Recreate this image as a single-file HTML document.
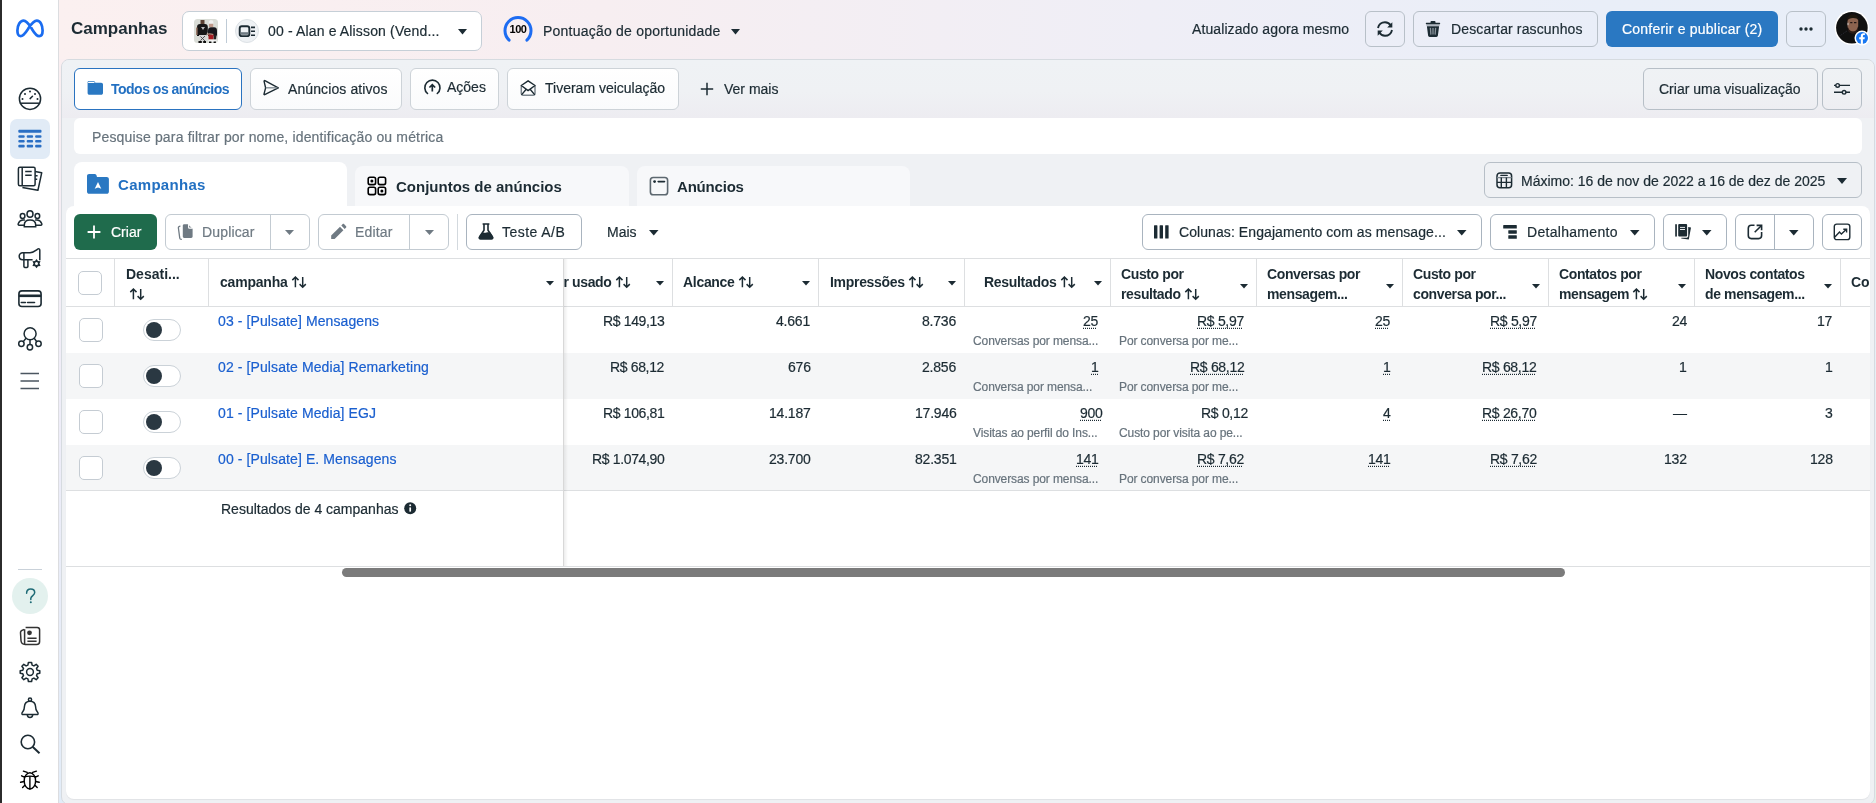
<!DOCTYPE html>
<html><head><meta charset="utf-8">
<style>
*{box-sizing:border-box;margin:0;padding:0}
html,body{width:1876px;height:803px;overflow:hidden}
body{position:relative;font-family:"Liberation Sans",sans-serif;font-size:14px;color:#1c2b33;background:#fff}
.a{position:absolute}
.t{position:absolute;white-space:nowrap;will-change:transform;-webkit-text-stroke:0.2px currentColor}
svg{position:absolute;overflow:visible}
.ar{display:inline-block;position:relative;width:15px;height:12px;margin-left:0.5px;vertical-align:-1px}
.ar svg{left:0;top:0}
.dt{text-decoration:underline dotted 1px;text-underline-offset:2px}
</style></head><body>
<div class="a" style="left:0px;top:0px;width:2px;height:803px;background:#2b2b2b"></div>
<div class="a" style="left:2px;top:0px;width:56px;height:803px;background:#fff"></div>
<div class="a" style="left:58px;top:0px;width:1px;height:803px;background:#dcdde0"></div>
<div class="a" style="left:59px;top:0px;width:1817px;height:803px;background:linear-gradient(90deg,#fbf0f0 0%,#f7eef1 30%,#efeef6 60%,#e9eef8 85%,#e8eef8 100%)"></div>
<div class="a" style="left:59px;top:59px;width:10px;height:744px;background:linear-gradient(180deg,#faeff1 0%,#efedf8 45%,#e2ecf8 100%)"></div>
<div class="a" style="left:1866px;top:59px;width:10px;height:744px;background:linear-gradient(180deg,#e8eef8 0%,#e6eff4 60%,#e3f0e9 100%)"></div>
<div class="a" style="left:61px;top:59px;width:1814px;height:746px;background:#eff1f4;border:1px solid #d6dbe0;border-radius:8px"></div>
<div class="a" style="left:62px;top:60px;width:1812px;height:58px;background:linear-gradient(180deg,#eff2f5 0%,#eff1f4 55%,#edecf1 100%);border-radius:7px 7px 0 0"></div>
<div class="a" style="left:66px;top:206px;width:1804px;height:593px;background:#fff;border-radius:8px;box-shadow:0 1px 1px rgba(0,0,0,0.06)"></div>
<svg style="left:16px;top:19px" width="28" height="19" viewBox="0 0 28 19"><path d="M4.6 17.2C2.2 17.2 1.4 14.6 1.4 11.6C1.4 6.2 4.2 1.6 7.6 1.6C10.6 1.6 12.6 4.6 15.2 8.8C17.8 13 19.8 17.2 23.2 17.2C25.6 17.2 26.6 14.6 26.6 11.6C26.6 6.2 24.4 1.6 20.8 1.6C17.6 1.6 15.4 4.8 12.8 8.8C10.2 12.8 7.6 17.2 4.6 17.2Z" fill="none" stroke="#1a6cf0" stroke-width="2.7"/></svg>
<svg style="left:18px;top:87px" width="24" height="24" viewBox="0 0 24 24"><circle cx="12" cy="11.8" r="10.6" fill="none" stroke="#1c2b33" stroke-width="1.5"/><path d="M1.8 16.2H22.2" stroke="#1c2b33" stroke-width="1.5"/><g fill="#1c2b33"><circle cx="4.5" cy="11.9" r="1"/><circle cx="7" cy="6.9" r="1"/><circle cx="12" cy="4.4" r="1"/><circle cx="17" cy="6.9" r="1"/><circle cx="19.5" cy="11.9" r="1"/></g><path d="M12.1 11.6L14.5 9.3" stroke="#1c2b33" stroke-width="1.5" stroke-linecap="round"/></svg>
<div class="a" style="left:10px;top:119px;width:40px;height:40px;background:#e1ebf6;border-radius:7px"></div>
<svg style="left:18px;top:129px" width="24" height="21" viewBox="0 0 24 21"><g fill="#2a6fc4"><rect x="0.3" y="0.8" width="23.2" height="3" rx="1"/><rect x="0.3" y="6.2" width="6.4" height="2.6" rx="1"/><rect x="8.7" y="6.2" width="6.4" height="2.6" rx="1"/><rect x="17.1" y="6.2" width="6.4" height="2.6" rx="1"/><rect x="0.3" y="11" width="6.4" height="2.6" rx="1"/><rect x="8.7" y="11" width="6.4" height="2.6" rx="1"/><rect x="17.1" y="11" width="6.4" height="2.6" rx="1"/><rect x="0.3" y="15.8" width="6.4" height="2.6" rx="1"/><rect x="8.7" y="15.8" width="6.4" height="2.6" rx="1"/><rect x="17.1" y="15.8" width="6.4" height="2.6" rx="1"/></g></svg>
<svg style="left:17px;top:166px" width="26" height="26" viewBox="0 0 26 26"><g fill="none" stroke="#1c2b33" stroke-width="1.5" stroke-linejoin="round"><path d="M18.1 5.4L24.7 6.8L20.9 24.3L5.4 21.5"/><rect x="1.4" y="1.2" width="16.7" height="18.5" rx="1.5" fill="#fff"/><path d="M5.2 1.2V19.7"/><path d="M8.2 5.6H14.7M8.2 9.2H14.7"/><path d="M18.1 9.8H20.6M18.1 13.3H20.2"/></g></svg>
<svg style="left:17px;top:209px" width="26" height="20" viewBox="0 0 26 20"><g fill="none" stroke="#1c2b33" stroke-width="1.5"><ellipse cx="13" cy="5" rx="3" ry="3.3"/><ellipse cx="5.6" cy="7" rx="2.3" ry="2.5"/><ellipse cx="20.4" cy="7" rx="2.3" ry="2.5"/><path d="M7.3 17.7V16C7.3 12.5 9.8 10.9 13 10.9C16.2 10.9 18.7 12.5 18.7 16V17.7H7.3Z"/><path d="M7.5 16.2H2.2C1.2 16.2 0.9 15.4 1.3 14.5C2.1 12.6 3.6 11.1 6 11.1H7.9"/><path d="M18.5 16.2H23.8C24.8 16.2 25.1 15.4 24.7 14.5C23.9 12.6 22.4 11.1 20 11.1H18.1"/></g></svg>
<svg style="left:18px;top:247px" width="24" height="22" viewBox="0 0 24 22"><g fill="none" stroke="#1c2b33" stroke-width="1.5" stroke-linejoin="round"><path d="M21.8 13.2V3.2C21.8 1.8 20.7 1.4 19.6 2.1C17.4 3.6 15.6 5.7 12 5.7H4.7C2.7 5.7 1.2 7.2 1.2 9.2C1.2 11.2 2.7 12.7 4.7 12.7H14.6"/><path d="M5.9 5.9V19.2C5.9 20.1 6.6 20.6 7.9 20.6C9.2 20.6 9.9 20.1 9.9 19.2V12.8"/></g><path d="M18.50 11.90L20.00 14.00L22.57 14.25L21.50 16.60L22.57 18.95L20.00 19.20L18.50 21.30L17.00 19.20L14.43 18.95L15.50 16.60L14.43 14.25L17.00 14.00Z" fill="#1c2b33"/><circle cx="18.5" cy="16.6" r="1.5" fill="#fff"/></svg>
<svg style="left:18px;top:290px" width="24" height="18" viewBox="0 0 24 18"><g fill="none" stroke="#1c2b33"><rect x="0.9" y="0.9" width="22.2" height="15.6" rx="3" stroke-width="1.6"/><path d="M0.9 5.8H23.1" stroke-width="2.6"/><path d="M3.3 12.5H7.4M9.6 12.5H16.5" stroke-width="1.6" stroke-linecap="round"/></g></svg>
<svg style="left:17px;top:326px" width="26" height="26" viewBox="0 0 26 26"><g fill="none" stroke="#1c2b33" stroke-width="1.5"><circle cx="13.1" cy="7.8" r="6"/><circle cx="4.4" cy="17.8" r="2.7"/><circle cx="12.9" cy="21.3" r="2.7"/><circle cx="21.5" cy="17.8" r="2.7"/><path d="M9 12.2L6.3 15.6M13 13.8V18.6M17.2 12.2L19.7 15.6"/></g></svg>
<svg style="left:20px;top:372px" width="20" height="18" viewBox="0 0 20 18"><g stroke="#4b5660" stroke-width="1.7"><path d="M0.5 1.5H19M0.5 9H19M0.5 16.5H19"/></g></svg>
<div class="a" style="left:18px;top:569px;width:24px;height:1px;background:#c9d1d9"></div>
<div class="a" style="left:12px;top:578px;width:36px;height:36px;background:#e3f1ee;border-radius:50%"></div>
<svg style="left:12px;top:578px" width="36" height="36" viewBox="0 0 36 36"><path d="M14.6 15.2C14.6 12.6 16.4 10.9 18.7 10.9C21 10.9 22.7 12.5 22.7 14.6C22.7 17.4 19.2 17.8 18.8 20.4V21.4" fill="none" stroke="#1f6b76" stroke-width="1.5" stroke-linecap="round"/><circle cx="18.8" cy="24.2" r="1" fill="#1f6b76"/></svg>
<svg style="left:19px;top:626px" width="22" height="20" viewBox="0 0 22 20"><g fill="none" stroke="#333" stroke-width="1.5" stroke-linejoin="round"><path d="M6.6 1.4H18.2C19.6 1.4 20.6 2.4 20.6 3.8V15.4C20.6 17.2 19.6 18.4 17.6 18.4H6.2C3.6 18.4 2.2 17 2 14.8L1.5 6.8C1.4 5.4 2.2 4.3 5.2 3.6"/><path d="M5.6 3.2V18.2"/></g><circle cx="10.5" cy="6.8" r="2.4" fill="#333"/><path d="M8.4 12.2H17.6M8.4 15.2H17.6" stroke="#333" stroke-width="1.5"/></svg>
<svg style="left:19px;top:661px" width="22" height="22" viewBox="0 0 22 22"><path d="M9.3 1.3H12.7L13.2 4.3L15.4 5.2L17.9 3.4L20.3 5.8L18.5 8.3L19.4 10.5L22.4 11V14.4L19.4 14.9L18.5 17.1L20.3 19.6L17.9 22L15.4 20.2L13.2 21.1L12.7 24.1" fill="none" stroke="none"/><g transform="translate(11 11)" fill="none" stroke="#1c2b33" stroke-width="1.5" stroke-linejoin="round"><path d="M-1.6 -9.6H1.6L2.1 -6.9L3.9 -6.1L6.2 -7.7L8.1 -5.8L6.5 -3.5L7.2 -1.8L9.8 -1.3V1.3L7.2 1.8L6.5 3.5L8.1 5.8L6.2 7.7L3.9 6.1L2.1 6.9L1.6 9.6H-1.6L-2.1 6.9L-3.9 6.1L-6.2 7.7L-8.1 5.8L-6.5 3.5L-7.2 1.8L-9.8 1.3V-1.3L-7.2 -1.8L-6.5 -3.5L-8.1 -5.8L-6.2 -7.7L-3.9 -6.1L-2.1 -6.9Z"/><circle r="3.4"/></g></svg>
<svg style="left:20px;top:697px" width="22" height="22" viewBox="0 0 22 22"><g fill="none" stroke="#1c2b33" stroke-width="1.5" stroke-linejoin="round"><circle cx="10" cy="2.7" r="1.6"/><path d="M10 4.3C6.8 4.3 4.6 6.6 4.4 9.8C4.3 11.6 4.3 12.6 3.2 14C2.1 15.4 1.2 16.3 2 17.2C2.3 17.5 2.8 17.6 3.4 17.6H16.6C17.2 17.6 17.7 17.5 18 17.2C18.8 16.3 17.9 15.4 16.8 14C15.7 12.6 15.7 11.6 15.6 9.8C15.4 6.6 13.2 4.3 10 4.3Z"/><path d="M7.3 17.8C7.5 19.3 8.6 20.4 10 20.4C11.4 20.4 12.5 19.3 12.7 17.8"/></g></svg>
<svg style="left:20px;top:734px" width="22" height="22" viewBox="0 0 22 22"><g fill="none" stroke="#1c2b33" stroke-width="1.6"><circle cx="7.9" cy="8" r="6.7"/><path d="M12.6 12.8L19.5 19.2" stroke-width="2"/></g></svg>
<svg style="left:19px;top:769px" width="22" height="22" viewBox="0 0 22 22"><g fill="none" stroke="#000" stroke-width="1.4" stroke-linecap="round"><ellipse cx="10.9" cy="11.9" rx="5.7" ry="8.1"/><path d="M5.4 7.6C7.5 7 14.3 7 16.4 7.6"/><path d="M10.9 7.6V20"/><path d="M8.2 3.4L4.4 2.2M13.6 3.4L17.4 2.2"/><path d="M5.4 8.2L2.6 6.8M5.2 12.5L1.6 13.3M5.6 16.5L3.6 18.5M16.4 8.2L19.2 6.8M16.6 12.5L20.2 13.3M16.2 16.5L18.2 18.5"/></g></svg>
<div class="t" style="left:71.0px;top:18.6px;font-size:17px;line-height:20px;font-weight:700;-webkit-text-stroke:0;color:#1c2b33">Campanhas</div>
<div class="a" style="left:182px;top:11px;width:300px;height:40px;background:#fff;border:1px solid #c6cfd7;border-radius:7px"></div>
<svg style="left:194px;top:19px" width="24" height="24" viewBox="0 0 24 24"><defs><clipPath id="cp1"><rect width="24" height="24" rx="3.5"/></clipPath><filter id="bl1" x="-10%" y="-10%" width="120%" height="120%"><feGaussianBlur stdDeviation="0.5"/></filter></defs><g clip-path="url(#cp1)"><rect width="24" height="24" fill="#d9dcd6"/><g filter="url(#bl1)"><path d="M6.5 1H10.5V5H6.5Z" fill="#5a4030"/><path d="M3 17V8C3 6 4.2 5 6 5H11C12.8 5 13.8 6 13.8 8V13L12 17Z" fill="#141414"/><path d="M7 8H11L9 11Z" fill="#b8b8b8"/><path d="M2 8.5H3.6V16H2Z" fill="#9a7a68"/><path d="M5 16H12.5L12 23H6Z" fill="#d4d4d4"/><path d="M6.5 17.5L11 22M11 17L6.5 21.5" stroke="#444" stroke-width="0.9"/><path d="M4.5 22H7.8V25H4.5ZM9.2 22H12V25H9.2Z" fill="#0c0c0c"/><path d="M14.8 3C15 1.8 15.8 1.2 17.2 1.2C18.6 1.2 19.4 1.8 19.4 3V4.8H14.8Z" fill="#f0f0f0"/><path d="M15 4.8H19.2V8H15Z" fill="#c0998a"/><path d="M14 17V11.5C14 9.4 15.2 8.2 17 8.2H20C22 8.2 23 9.4 23 11.5V16.5Z" fill="#18181a"/><path d="M14.4 15.6H19.8L19.4 20.4H14.6Z" fill="#a41e24"/><path d="M12.8 15.4C14.6 14.6 17 14.6 19.2 15.6" stroke="#b08878" stroke-width="1.2" fill="none"/><path d="M19.8 16H22.6L22 20.5H19.6Z" fill="#202020"/><path d="M14.6 20.6H22.4V23H14.6Z" fill="#f2f2f2"/><path d="M15 22.4H17.4V25H15ZM19.6 22.4H22V25H19.6Z" fill="#0c0c0c"/></g></g></svg>
<div class="a" style="left:226px;top:19px;width:1px;height:24px;background:#bfcbd6"></div>
<div class="a" style="left:235px;top:19px;width:24px;height:24px;background:#eef1f4;border:1px solid #dde2e6;border-radius:50%"></div>
<svg style="left:235px;top:19px" width="24" height="24" viewBox="0 0 24 24"><rect x="4.7" y="7.2" width="9.6" height="9.9" rx="2.2" fill="none" stroke="#1c2b33" stroke-width="1.9"/><rect x="6" y="13.2" width="7" height="2.6" fill="#6f7a83"/><path d="M16 8.4H20M16 12.2H20M16 16.2H20" stroke="#1c2b33" stroke-width="1.6"/></svg>
<div class="t" style="left:267.5px;top:22.9px;font-size:14px;line-height:16px;color:#1c2b33;letter-spacing:0.15px">00 - Alan e Alisson (Vend...</div>
<svg style="left:457.5px;top:28.5px" width="9" height="5.5"><path d="M0 0H9L4.5 5.5Z" fill="#1c2b33"/></svg>
<svg style="left:503px;top:16px" width="30" height="27" viewBox="0 0 30 27"><path d="M6.1 24.1A13 13 0 1 1 23.9 24.1" fill="none" stroke="#1d6cf2" stroke-width="3" stroke-linecap="round"/></svg>
<div class="t" style="left:503px;top:23.2px;width:30px;text-align:center;font-size:11px;line-height:13px;font-weight:700;-webkit-text-stroke:0;color:#000;letter-spacing:-0.4px">100</div>
<div class="t" style="left:542.5px;top:22.9px;font-size:14px;line-height:16px;color:#1c2b33;letter-spacing:0.22px">Pontuação de oportunidade</div>
<svg style="left:731px;top:28.6px" width="9" height="5.5"><path d="M0 0H9L4.5 5.5Z" fill="#1c2b33"/></svg>
<div class="t" style="left:1191.5px;top:21.3px;font-size:14px;line-height:16px;color:#1c2b33;letter-spacing:0.1px">Atualizado agora mesmo</div>
<div class="a" style="left:1365px;top:11px;width:40px;height:36px;border:1px solid #b8c0c8;border-radius:6px"></div>
<svg style="left:1376px;top:20px" width="18" height="18" viewBox="0 0 18 18"><g fill="none" stroke="#1c2b33" stroke-width="1.9"><path d="M2 8C2.6 4.6 5.5 2.2 9 2.2C11.6 2.2 13.6 3.5 14.7 5.4"/><path d="M16 10C15.4 13.4 12.5 15.8 9 15.8C6.4 15.8 4.4 14.5 3.3 12.6"/></g><path d="M16.3 2.3V7.6H11.2Z" fill="#1c2b33"/><path d="M1.7 15.7V10.4H6.8Z" fill="#1c2b33"/></svg>
<div class="a" style="left:1413px;top:11px;width:185px;height:36px;border:1px solid #b8c0c8;border-radius:6px"></div>
<svg style="left:1425px;top:20px" width="16" height="18" viewBox="0 0 16 18"><path d="M5.5 1.9C5.5 1.4 5.9 1 6.4 1H9.6C10.1 1 10.5 1.4 10.5 1.9V2.8H14.6C15 2.8 15.2 3.1 15.2 3.5C15.2 3.9 15 4.2 14.6 4.2H1.4C1 4.2 0.8 3.9 0.8 3.5C0.8 3.1 1 2.8 1.4 2.8H5.5Z" fill="#1c2b33"/><rect x="1.4" y="4.2" width="13.2" height="1.4" fill="#8a949c"/><path d="M1.9 6.2H14.1L12.9 15.6C12.8 16.4 12.2 16.9 11.4 16.9H4.6C3.8 16.9 3.2 16.4 3.1 15.6Z" fill="#1c2b33"/><path d="M5.4 7.9L5.9 14.6M8 7.9V14.6M10.6 7.9L10.1 14.6" stroke="#8a949c" stroke-width="1.3"/></svg>
<div class="t" style="left:1450.5px;top:21.3px;font-size:14px;line-height:16px;color:#1c2b33;letter-spacing:0.13px">Descartar rascunhos</div>
<div class="a" style="left:1606px;top:11px;width:172px;height:36px;background:#2a78c2;border-radius:6px"></div>
<div class="t" style="left:1621.8px;top:21.2px;font-size:14px;line-height:16px;color:#fff;letter-spacing:0.22px">Conferir e publicar (2)</div>
<div class="a" style="left:1786px;top:11px;width:40px;height:36px;border:1px solid #b8c0c8;border-radius:6px"></div>
<svg style="left:1798px;top:27px" width="16" height="4" viewBox="0 0 16 4"><g fill="#1c2b33"><circle cx="3" cy="2" r="1.7"/><circle cx="8" cy="2" r="1.7"/><circle cx="13" cy="2" r="1.7"/></g></svg>
<svg style="left:1834px;top:10px" width="36" height="36" viewBox="0 0 36 36"><defs><clipPath id="cp2"><circle cx="17.9" cy="17.8" r="15.8"/></clipPath><filter id="bl2" x="-20%" y="-20%" width="140%" height="140%"><feGaussianBlur stdDeviation="0.5"/></filter></defs><circle cx="17.9" cy="17.8" r="17.3" fill="#fff"/><g clip-path="url(#cp2)"><rect width="36" height="36" fill="#101010"/><g filter="url(#bl2)"><path d="M13.5 10.5C13.5 7.5 15.6 6.2 19 6.2C22.4 6.2 24.2 7.8 24.2 10.5V15.5C24.2 18.6 22.6 21.8 19 21.8C15.4 21.8 13.5 18.6 13.5 15.5Z" fill="#8c6450"/><path d="M13.8 16.5C14.6 19.8 16.6 21.6 19 21.6C21.4 21.6 23.4 19.8 24 16.5L24.2 19.5C23.4 22.4 21.4 23.8 19 23.8C16.6 23.8 14.6 22.4 13.8 19.5Z" fill="#2a1c16"/><path d="M12.8 11.5C12.8 6.2 15.4 4.2 19 4.2C22.8 4.2 25 6.2 24.8 11C23.6 8.6 21.6 8 19 8C16.4 8 14.2 8.6 12.8 11.5Z" fill="#1c120e"/><path d="M16.2 12.6H18.4M20 12.6H22.4" stroke="#241814" stroke-width="1.2"/><path d="M14 12.8V15.2" stroke="#e8e8e8" stroke-width="0.8"/><path d="M4 27L13 21" stroke="#3a3a4a" stroke-width="0.7" stroke-dasharray="1 1"/></g></g><circle cx="28" cy="28" r="7.5" fill="#fff"/><circle cx="28" cy="28" r="6" fill="#1877f2"/><path d="M28.9 34V29.2H30.5L30.8 27.3H28.9V26.1C28.9 25.5 29.2 25 30.1 25H30.9V23.3C30.5 23.2 30 23.2 29.4 23.2C27.8 23.2 26.8 24.2 26.8 25.9V27.3H25.2V29.2H26.8V34Z" fill="#fff"/></svg>
<div class="a" style="left:74px;top:68px;width:168px;height:42px;background:#fff;border:1.5px solid #2a73c0;border-radius:6px"></div>
<svg style="left:87px;top:80px" width="17" height="16" viewBox="0 0 17 16"><path d="M0.6 2.2C0.6 1.2 1.2 0.9 2 0.9H6.4C7.2 0.9 7.6 1.4 8 2.1L8.4 2.8H14.2C15.2 2.8 16 3.5 16 4.5V13C16 14 15.2 14.8 14.2 14.8H2.4C1.4 14.8 0.6 14 0.6 13Z" fill="#2a78c2"/><path d="M1.6 2.3H7" stroke="#fff" stroke-width="1.2" stroke-linecap="round"/></svg>
<div class="t" style="left:110.5px;top:80.5px;font-size:14px;line-height:16px;font-weight:700;-webkit-text-stroke:0;color:#2270c2;letter-spacing:-0.5px">Todos os anúncios</div>
<div class="a" style="left:250px;top:68px;width:152px;height:42px;background:linear-gradient(#fff,#fafbfc);border:1px solid #cdd3d8;border-radius:6px"></div>
<svg style="left:262px;top:79px" width="20" height="18" viewBox="0 0 20 18"><path d="M2.9 1.6L16.3 8.8L2.7 15.7C2.2 15.9 1.9 15.5 2 15.1L3.6 8.8L2.1 2.3C2 1.8 2.4 1.4 2.9 1.6Z" fill="none" stroke="#1c2b33" stroke-width="1.4" stroke-linejoin="round"/><path d="M3.8 8.8H15.5" stroke="#7d8890" stroke-width="1.3"/></svg>
<div class="t" style="left:288.0px;top:80.5px;font-size:14px;line-height:16px;color:#1c2b33;letter-spacing:0.1px">Anúncios ativos</div>
<div class="a" style="left:410px;top:68px;width:89px;height:42px;background:linear-gradient(#fff,#fafbfc);border:1px solid #cdd3d8;border-radius:6px"></div>
<svg style="left:422px;top:79px" width="20" height="17" viewBox="0 0 20 17"><path d="M5.5 14.5A7.6 7.6 0 1 1 15.3 14.5" fill="none" stroke="#1c2b33" stroke-width="1.6" stroke-linecap="round"/><path d="M10.3 12.6V5.8M7.4 8.5L10.3 5.6L13.2 8.5" fill="none" stroke="#1c2b33" stroke-width="1.7"/></svg>
<div class="t" style="left:447.3px;top:79.1px;font-size:14px;line-height:16px;color:#1c2b33">Ações</div>
<div class="a" style="left:507px;top:68px;width:172px;height:42px;background:linear-gradient(#fff,#fafbfc);border:1px solid #cdd3d8;border-radius:6px"></div>
<svg style="left:519px;top:79px" width="18" height="18" viewBox="0 0 18 18"><path d="M2.3 6.5V14.6C2.3 15.6 3 16.2 4 16.2H14.3C15.3 16.2 16 15.6 16 14.6V6.5" fill="none" stroke="#7b858d" stroke-width="1.5"/><path d="M2.3 6.5L9.1 1.8L16 6.5L9.1 11.6Z" fill="none" stroke="#1c2b33" stroke-width="1.4" stroke-linejoin="round"/><path d="M2.5 15.9L7.2 10.3M15.8 15.9L11.1 10.3" stroke="#1c2b33" stroke-width="1.4"/></svg>
<div class="t" style="left:545.0px;top:80.3px;font-size:14px;line-height:16px;color:#1c2b33">Tiveram veiculação</div>
<svg style="left:700px;top:82px" width="14" height="14" viewBox="0 0 14 14"><path d="M7 0.8V13.2M0.8 7H13.2" stroke="#1c2b33" stroke-width="1.5"/></svg>
<div class="t" style="left:723.5px;top:81.1px;font-size:14px;line-height:16px;color:#1c2b33">Ver mais</div>
<div class="a" style="left:1643px;top:68px;width:175px;height:42px;border:1px solid #b7bfc7;border-radius:6px"></div>
<div class="t" style="left:1659.3px;top:81.1px;font-size:14px;line-height:16px;color:#1c2b33">Criar uma visualização</div>
<div class="a" style="left:1822px;top:68px;width:40px;height:42px;border:1px solid #b7bfc7;border-radius:6px"></div>
<svg style="left:1833px;top:82px" width="18" height="13" viewBox="0 0 18 13"><g fill="none" stroke="#1c2b33" stroke-width="1.4"><path d="M1 3.4H2.9M6.3 3.4H17M1 10.3H9.5M12.8 10.3H17"/><circle cx="4.6" cy="3.4" r="1.8"/><circle cx="11.1" cy="10.3" r="1.8"/></g></svg>
<div class="a" style="left:74px;top:118px;width:1788px;height:36px;background:#fff;border-radius:6px"></div>
<div class="t" style="left:91.5px;top:128.5px;font-size:14px;line-height:16px;color:#67737c;letter-spacing:0.16px">Pesquise para filtrar por nome, identificação ou métrica</div>
<div class="a" style="left:1484px;top:162px;width:378px;height:36px;border:1px solid #b7bfc7;border-radius:6px"></div>
<svg style="left:1496px;top:172px" width="17" height="17" viewBox="0 0 17 17"><rect x="1" y="0.9" width="14.6" height="14.9" rx="3" fill="none" stroke="#1c2b33" stroke-width="1.5"/><path d="M1 5.6H15.6" stroke="#7b858d" stroke-width="1.3"/><path d="M4.9 3.4H11.2" stroke="#1c2b33" stroke-width="1.4" stroke-linecap="round"/><path d="M1 10.4H15.6M5.3 5.6V15.8M10.4 5.6V15.8" stroke="#1c2b33" stroke-width="1.4"/></svg>
<div class="t" style="left:1521.0px;top:172.6px;font-size:14px;line-height:16px;color:#1c2b33">Máximo: 16 de nov de 2022 a 16 de dez de 2025</div>
<svg style="left:1837px;top:177.5px" width="10" height="6"><path d="M0 0H10L5.0 6Z" fill="#1c2b33"/></svg>
<div class="a" style="left:74px;top:162px;width:273px;height:46px;background:#fff;border-radius:8px 8px 0 0"></div>
<div class="a" style="left:355px;top:166px;width:274px;height:40px;background:#f7f8fa;border-radius:8px 8px 0 0"></div>
<div class="a" style="left:637px;top:166px;width:273px;height:40px;background:#f7f8fa;border-radius:8px 8px 0 0"></div>
<svg style="left:86px;top:173px" width="24" height="21" viewBox="0 0 24 21"><path d="M1 3.2C1 1.8 1.8 1 3.1 1H8.6C9.4 1 10 1.4 10.4 2.1L11 4H20.6C22 4 22.9 4.9 22.9 6.3V18.4C22.9 19.8 22 20.8 20.6 20.8H3.3C1.9 20.8 1 19.8 1 18.4Z" fill="#2a78c2"/><path d="M12 9L15.3 15.8L12 14.4L8.7 15.8Z" fill="#fff"/></svg>
<div class="t" style="left:117.5px;top:175.8px;font-size:15px;line-height:18px;font-weight:700;-webkit-text-stroke:0;color:#2270c2;letter-spacing:0.3px">Campanhas</div>
<svg style="left:367px;top:176px" width="20" height="20" viewBox="0 0 20 20"><g fill="none" stroke="#000" stroke-width="1.6"><rect x="1.2" y="1.2" width="7.4" height="7.4" rx="1.8"/><rect x="11.2" y="1.2" width="7.4" height="7.4" rx="1.8"/><rect x="1.2" y="11.2" width="7.4" height="7.4" rx="1.8"/><rect x="11.2" y="11.2" width="7.4" height="7.4" rx="1.8"/></g><circle cx="4.9" cy="4.9" r="1.5" fill="#000"/><circle cx="14.9" cy="14.9" r="1.5" fill="#000"/></svg>
<div class="t" style="left:395.5px;top:177.8px;font-size:15px;line-height:18px;font-weight:700;-webkit-text-stroke:0;color:#1c2b33">Conjuntos de anúncios</div>
<svg style="left:649px;top:176px" width="20" height="20" viewBox="0 0 20 20"><rect x="1.4" y="1.5" width="17.2" height="17.2" rx="2.8" fill="none" stroke="#5d6870" stroke-width="1.6"/><circle cx="5.6" cy="5.6" r="1.4" fill="#1c2b33"/><path d="M9.2 5.6H15.5" stroke="#1c2b33" stroke-width="1.6" stroke-linecap="round"/></svg>
<div class="t" style="left:677.0px;top:178.0px;font-size:15px;line-height:18px;font-weight:700;-webkit-text-stroke:0;color:#1c2b33;letter-spacing:-0.2px">Anúncios</div>
<div class="a" style="left:74px;top:214px;width:83px;height:36px;background:#1f6b4c;border-radius:6px"></div>
<svg style="left:87px;top:225px" width="14" height="14" viewBox="0 0 14 14"><path d="M7 0.6V13.4M0.6 7H13.4" stroke="#fff" stroke-width="1.8"/></svg>
<div class="t" style="left:110.5px;top:224.1px;font-size:14px;line-height:16px;color:#fff">Criar</div>
<div class="a" style="left:165px;top:214px;width:145px;height:36px;border:1px solid #c3cbd2;border-radius:6px"></div>
<div class="a" style="left:270px;top:214px;width:1px;height:36px;background:#c3cbd2"></div>
<svg style="left:176px;top:223px" width="18" height="18" viewBox="0 0 18 18"><path d="M7.2 1.2H11.8L16.6 5.8V13.6C16.6 14.4 16 15 15.2 15H8.2C7.4 15 6.8 14.4 6.8 13.6V2.6C6.8 1.8 7.4 1.2 8.2 1.2Z" fill="#6f7a83"/><path d="M12.6 1.3V4.4C12.6 4.8 12.9 5.1 13.3 5.1H16.5" fill="none" stroke="#fff" stroke-width="1.1"/><path d="M4.4 3.2C3 3.3 2.2 3.8 2.4 5L3.8 15.3C3.9 16.2 4.6 16.5 5.8 16.4" fill="none" stroke="#6f7a83" stroke-width="1.3"/></svg>
<div class="t" style="left:201.5px;top:224.1px;font-size:14px;line-height:16px;color:#6f7a83;letter-spacing:0.15px">Duplicar</div>
<svg style="left:285.4px;top:229.5px" width="9" height="5"><path d="M0 0H9L4.5 5Z" fill="#6f7a83"/></svg>
<div class="a" style="left:318px;top:214px;width:131px;height:36px;border:1px solid #c3cbd2;border-radius:6px"></div>
<div class="a" style="left:409px;top:214px;width:1px;height:36px;background:#c3cbd2"></div>
<svg style="left:330px;top:223px" width="18" height="18" viewBox="0 0 18 18"><path d="M1.2 15.9V12.6L10 3.8L13.4 7.2L4.6 16Z" fill="#6f7a83"/><path d="M11.3 2.5L12.7 1.1C13.1 0.7 13.6 0.7 14 1.1L16.1 3.2C16.5 3.6 16.5 4.1 16.1 4.5L14.7 5.9Z" fill="#6f7a83"/></svg>
<div class="t" style="left:354.8px;top:224.1px;font-size:14px;line-height:16px;color:#6f7a83;letter-spacing:0.15px">Editar</div>
<svg style="left:424.6px;top:229.5px" width="9" height="5"><path d="M0 0H9L4.5 5Z" fill="#6f7a83"/></svg>
<div class="a" style="left:457px;top:214px;width:1px;height:36px;background:#d3d9de"></div>
<div class="a" style="left:466px;top:214px;width:116px;height:36px;border:1px solid #a9b4bf;border-radius:6px"></div>
<svg style="left:478px;top:223px" width="16" height="18" viewBox="0 0 16 18"><path d="M4.6 1H11.4M6 1V7.2L1.6 13.8C1 14.8 1.4 16 2.6 16H13.4C14.6 16 15 14.8 14.4 13.8L10 7.2V1" fill="none" stroke="#1c2b33" stroke-width="1.6" stroke-linejoin="round"/><path d="M3.6 10.2C5.6 9.6 7.2 10 8.4 9.6C10 9.1 11 9.1 12.3 9.6L15.2 14.3C15.6 15.2 15.2 16 14 16H2C0.8 16 0.4 15.2 0.8 14.3Z" fill="#1c2b33"/></svg>
<div class="t" style="left:502.3px;top:224.1px;font-size:14px;line-height:16px;color:#1c2b33;letter-spacing:0.45px">Teste A/B</div>
<div class="t" style="left:606.5px;top:224.1px;font-size:14px;line-height:16px;color:#1c2b33">Mais</div>
<svg style="left:648.5px;top:229.5px" width="9.5" height="5.5"><path d="M0 0H9.5L4.75 5.5Z" fill="#1c2b33"/></svg>
<div class="a" style="left:1142px;top:214px;width:340px;height:36px;border:1px solid #a9b4bf;border-radius:6px"></div>
<svg style="left:1153px;top:225px" width="18" height="14" viewBox="0 0 18 14"><g fill="#1c2b33"><rect x="1" y="0.3" width="3.4" height="13.2" rx="0.5"/><rect x="6.6" y="0.3" width="3.4" height="13.2" rx="0.5"/><rect x="12.2" y="0.3" width="3.4" height="13.2" rx="0.5"/></g></svg>
<div class="t" style="left:1178.8px;top:224.1px;font-size:14px;line-height:16px;color:#1c2b33;letter-spacing:0.08px">Colunas: Engajamento com as mensage...</div>
<svg style="left:1457.4px;top:229.5px" width="9.5" height="5.5"><path d="M0 0H9.5L4.75 5.5Z" fill="#1c2b33"/></svg>
<div class="a" style="left:1490px;top:214px;width:165px;height:36px;border:1px solid #a9b4bf;border-radius:6px"></div>
<svg style="left:1502px;top:224px" width="16" height="16" viewBox="0 0 16 16"><g fill="#1c2b33"><rect x="1.2" y="1.1" width="13.6" height="3.5" rx="0.4"/><rect x="6.3" y="6.2" width="8.5" height="3.5" rx="0.4"/><rect x="6.3" y="11.3" width="8.5" height="3.5" rx="0.4"/></g></svg>
<div class="t" style="left:1526.8px;top:224.1px;font-size:14px;line-height:16px;color:#1c2b33;letter-spacing:0.3px">Detalhamento</div>
<svg style="left:1630.3px;top:229.5px" width="9.5" height="5.5"><path d="M0 0H9.5L4.75 5.5Z" fill="#1c2b33"/></svg>
<div class="a" style="left:1663px;top:214px;width:64px;height:36px;border:1px solid #a9b4bf;border-radius:6px"></div>
<svg style="left:1674px;top:223px" width="18" height="18" viewBox="0 0 18 18"><g fill="#1c2b33"><rect x="1.2" y="1.1" width="1.7" height="12.7" rx="0.8"/><rect x="4.2" y="1.1" width="8.9" height="12.5" rx="1"/><path d="M14.2 3.9L17 4.6L14.8 16.6L7.2 15.4L7.4 14.7H12.4C13.4 14.7 14 14 14.2 13.2Z"/></g><path d="M6 4.4H11M6 6.5H11" stroke="#fff" stroke-width="0.9"/></svg>
<svg style="left:1702px;top:229.5px" width="9.5" height="5.5"><path d="M0 0H9.5L4.75 5.5Z" fill="#1c2b33"/></svg>
<div class="a" style="left:1735px;top:214px;width:79px;height:36px;border:1px solid #a9b4bf;border-radius:6px"></div>
<div class="a" style="left:1774px;top:214px;width:1px;height:36px;background:#a9b4bf"></div>
<svg style="left:1747px;top:224px" width="16" height="16" viewBox="0 0 16 16"><g fill="none" stroke="#1c2b33" stroke-width="1.6"><path d="M7.5 1.3H4.3C2.6 1.3 1.3 2.6 1.3 4.3V11.6C1.3 13.3 2.6 14.6 4.3 14.6H11.6C13.3 14.6 14.6 13.3 14.6 11.6V8.1"/><path d="M7.7 8.3L14 2"/><path d="M9.6 1.4H14.6V6.2"/></g></svg>
<svg style="left:1789.3px;top:229.5px" width="9.5" height="5.5"><path d="M0 0H9.5L4.75 5.5Z" fill="#1c2b33"/></svg>
<div class="a" style="left:1822px;top:214px;width:40px;height:36px;border:1px solid #a9b4bf;border-radius:6px"></div>
<svg style="left:1833px;top:223px" width="18" height="18" viewBox="0 0 18 18"><g fill="none" stroke="#1c2b33" stroke-width="1.4"><rect x="1.3" y="1.1" width="15.5" height="15.5" rx="2.4"/><path d="M1.6 14.3L6.5 9L8.4 11.1L13.2 6.4"/><path d="M10.3 6.2H13.6V9.5"/></g></svg>
<div class="a" style="left:66px;top:258px;width:1804px;height:1px;background:#dddfe1"></div>
<div class="a" style="left:66px;top:306px;width:1804px;height:1px;background:#dddfe1"></div>
<div class="a" style="left:66px;top:307px;width:1804px;height:46px;background:#fff"></div>
<div class="a" style="left:66px;top:353px;width:1804px;height:46px;background:#f5f6f7"></div>
<div class="a" style="left:66px;top:399px;width:1804px;height:46px;background:#fff"></div>
<div class="a" style="left:66px;top:445px;width:1804px;height:45px;background:#f5f6f7"></div>
<div class="a" style="left:66px;top:352px;width:1804px;height:0px;"></div>
<div class="a" style="left:66px;top:490px;width:1804px;height:1px;background:#dddfe1"></div>
<div class="a" style="left:66px;top:566px;width:1804px;height:1px;background:#dddfe1"></div>
<div class="a" style="left:114px;top:259px;width:1px;height:47px;background:#dddfe1"></div>
<div class="a" style="left:208px;top:259px;width:1px;height:47px;background:#dddfe1"></div>
<div class="a" style="left:672px;top:259px;width:1px;height:47px;background:#dddfe1"></div>
<div class="a" style="left:818px;top:259px;width:1px;height:47px;background:#dddfe1"></div>
<div class="a" style="left:964px;top:259px;width:1px;height:47px;background:#dddfe1"></div>
<div class="a" style="left:1110px;top:259px;width:1px;height:47px;background:#dddfe1"></div>
<div class="a" style="left:1256px;top:259px;width:1px;height:47px;background:#dddfe1"></div>
<div class="a" style="left:1402px;top:259px;width:1px;height:47px;background:#dddfe1"></div>
<div class="a" style="left:1548px;top:259px;width:1px;height:47px;background:#dddfe1"></div>
<div class="a" style="left:1694px;top:259px;width:1px;height:47px;background:#dddfe1"></div>
<div class="a" style="left:1840px;top:259px;width:1px;height:47px;background:#dddfe1"></div>
<div class="a" style="left:563px;top:259px;width:1px;height:307px;background:#d8d8d8"></div>
<div class="a" style="left:564px;top:259px;width:4px;height:307px;background:linear-gradient(90deg,rgba(0,0,0,0.07),rgba(0,0,0,0))"></div>
<div class="a" style="left:342px;top:568px;width:1223px;height:9px;background:#7b7b7b;border-radius:5px"></div>
<div class="a" style="left:78px;top:271px;width:23.5px;height:23.5px;background:#fff;border:1px solid #c5ccd3;border-radius:5px"></div>
<div class="t" style="left:125.5px;top:265.8px;font-size:14px;line-height:16px;font-weight:700;-webkit-text-stroke:0;color:#1c2b33">Desati...</div>
<div class="t" style="left:129.3px;top:285.9px;font-size:14px;line-height:16px;font-weight:700;-webkit-text-stroke:0;color:#1c2b33"><span class="ar"><svg width="15" height="12" viewBox="0 0 15 12"><path d="M3.4 11.2V1M0.3 4.1L3.4 1L6.5 4.1M10.7 1V11.2M7.6 8.1L10.7 11.2L13.8 8.1" fill="none" stroke="#1c2b33" stroke-width="1.5"/></svg></span></div>
<div class="t" style="left:219.5px;top:273.8px;font-size:14px;line-height:16px;font-weight:700;-webkit-text-stroke:0;color:#1c2b33;letter-spacing:-0.2px">campanha <span class="ar"><svg width="15" height="12" viewBox="0 0 15 12"><path d="M3.4 11.2V1M0.3 4.1L3.4 1L6.5 4.1M10.7 1V11.2M7.6 8.1L10.7 11.2L13.8 8.1" fill="none" stroke="#1c2b33" stroke-width="1.5"/></svg></span></div>
<svg style="left:546px;top:281px" width="8" height="4.5"><path d="M0 0H8L4.0 4.5Z" fill="#1c2b33"/></svg>
<div class="a" style="left:564px;top:259px;width:1306px;height:47px;overflow:hidden">
<div class="t" style="left:-28.2px;top:14.9px;font-size:14px;line-height:16px;font-weight:700;color:#1c2b33;-webkit-text-stroke:0;letter-spacing:-0.35px">Valor usado <span class="ar"><svg width="15" height="12" viewBox="0 0 15 12"><path d="M3.4 11.2V1M0.3 4.1L3.4 1L6.5 4.1M10.7 1V11.2M7.6 8.1L10.7 11.2L13.8 8.1" fill="none" stroke="#1c2b33" stroke-width="1.5"/></svg></span></div>
</div>
<svg style="left:656px;top:281px" width="8" height="4.5"><path d="M0 0H8L4.0 4.5Z" fill="#1c2b33"/></svg>
<div class="t" style="left:683.2px;top:273.9px;font-size:14px;line-height:16px;font-weight:700;-webkit-text-stroke:0;color:#1c2b33;letter-spacing:-0.3px">Alcance <span class="ar"><svg width="15" height="12" viewBox="0 0 15 12"><path d="M3.4 11.2V1M0.3 4.1L3.4 1L6.5 4.1M10.7 1V11.2M7.6 8.1L10.7 11.2L13.8 8.1" fill="none" stroke="#1c2b33" stroke-width="1.5"/></svg></span></div>
<svg style="left:802px;top:281px" width="8" height="4.5"><path d="M0 0H8L4.0 4.5Z" fill="#1c2b33"/></svg>
<div class="t" style="left:829.5px;top:273.9px;font-size:14px;line-height:16px;font-weight:700;-webkit-text-stroke:0;color:#1c2b33;letter-spacing:-0.3px">Impressões <span class="ar"><svg width="15" height="12" viewBox="0 0 15 12"><path d="M3.4 11.2V1M0.3 4.1L3.4 1L6.5 4.1M10.7 1V11.2M7.6 8.1L10.7 11.2L13.8 8.1" fill="none" stroke="#1c2b33" stroke-width="1.5"/></svg></span></div>
<svg style="left:948px;top:281px" width="8" height="4.5"><path d="M0 0H8L4.0 4.5Z" fill="#1c2b33"/></svg>
<div class="t" style="left:983.5px;top:273.9px;font-size:14px;line-height:16px;font-weight:700;-webkit-text-stroke:0;color:#1c2b33;letter-spacing:-0.3px">Resultados <span class="ar"><svg width="15" height="12" viewBox="0 0 15 12"><path d="M3.4 11.2V1M0.3 4.1L3.4 1L6.5 4.1M10.7 1V11.2M7.6 8.1L10.7 11.2L13.8 8.1" fill="none" stroke="#1c2b33" stroke-width="1.5"/></svg></span></div>
<svg style="left:1094px;top:281px" width="8" height="4.5"><path d="M0 0H8L4.0 4.5Z" fill="#1c2b33"/></svg>
<div class="t" style="left:1121.4px;top:266.3px;font-size:14px;line-height:16px;font-weight:700;-webkit-text-stroke:0;color:#1c2b33;letter-spacing:-0.38px">Custo por</div>
<div class="t" style="left:1121.4px;top:285.9px;font-size:14px;line-height:16px;font-weight:700;-webkit-text-stroke:0;color:#1c2b33;letter-spacing:-0.38px">resultado <span class="ar"><svg width="15" height="12" viewBox="0 0 15 12"><path d="M3.4 11.2V1M0.3 4.1L3.4 1L6.5 4.1M10.7 1V11.2M7.6 8.1L10.7 11.2L13.8 8.1" fill="none" stroke="#1c2b33" stroke-width="1.5"/></svg></span></div>
<svg style="left:1240px;top:284px" width="8" height="4.5"><path d="M0 0H8L4.0 4.5Z" fill="#1c2b33"/></svg>
<div class="t" style="left:1267.1px;top:266.3px;font-size:14px;line-height:16px;font-weight:700;-webkit-text-stroke:0;color:#1c2b33;letter-spacing:-0.38px">Conversas por</div>
<div class="t" style="left:1267.1px;top:285.9px;font-size:14px;line-height:16px;font-weight:700;-webkit-text-stroke:0;color:#1c2b33;letter-spacing:-0.38px">mensagem...</div>
<svg style="left:1386px;top:284px" width="8" height="4.5"><path d="M0 0H8L4.0 4.5Z" fill="#1c2b33"/></svg>
<div class="t" style="left:1413.0px;top:266.3px;font-size:14px;line-height:16px;font-weight:700;-webkit-text-stroke:0;color:#1c2b33;letter-spacing:-0.38px">Custo por</div>
<div class="t" style="left:1413.0px;top:285.9px;font-size:14px;line-height:16px;font-weight:700;-webkit-text-stroke:0;color:#1c2b33;letter-spacing:-0.38px">conversa por...</div>
<svg style="left:1532px;top:284px" width="8" height="4.5"><path d="M0 0H8L4.0 4.5Z" fill="#1c2b33"/></svg>
<div class="t" style="left:1559.0px;top:266.3px;font-size:14px;line-height:16px;font-weight:700;-webkit-text-stroke:0;color:#1c2b33;letter-spacing:-0.38px">Contatos por</div>
<div class="t" style="left:1559.0px;top:285.9px;font-size:14px;line-height:16px;font-weight:700;-webkit-text-stroke:0;color:#1c2b33;letter-spacing:-0.38px">mensagem <span class="ar"><svg width="15" height="12" viewBox="0 0 15 12"><path d="M3.4 11.2V1M0.3 4.1L3.4 1L6.5 4.1M10.7 1V11.2M7.6 8.1L10.7 11.2L13.8 8.1" fill="none" stroke="#1c2b33" stroke-width="1.5"/></svg></span></div>
<svg style="left:1678px;top:284px" width="8" height="4.5"><path d="M0 0H8L4.0 4.5Z" fill="#1c2b33"/></svg>
<div class="t" style="left:1705.0px;top:266.3px;font-size:14px;line-height:16px;font-weight:700;-webkit-text-stroke:0;color:#1c2b33;letter-spacing:-0.38px">Novos contatos</div>
<div class="t" style="left:1705.0px;top:285.9px;font-size:14px;line-height:16px;font-weight:700;-webkit-text-stroke:0;color:#1c2b33;letter-spacing:-0.38px">de mensagem...</div>
<svg style="left:1824px;top:284px" width="8" height="4.5"><path d="M0 0H8L4.0 4.5Z" fill="#1c2b33"/></svg>
<div class="a" style="left:1846px;top:259px;width:24px;height:47px;overflow:hidden">
<div class="t" style="left:5px;top:15.1px;font-size:14px;line-height:16px;font-weight:700;-webkit-text-stroke:0;color:#1c2b33">Co</div>
</div>
<div class="a" style="left:79px;top:318px;width:23.5px;height:23.5px;background:#fff;border:1px solid #c5ccd3;border-radius:5px"></div>
<div class="a" style="left:143px;top:319px;width:38px;height:22px;background:#fff;border:1px solid #cbd2d8;border-radius:11px"></div>
<div class="a" style="left:146px;top:322px;width:16px;height:16px;background:#2a3842;border-radius:50%"></div>
<div class="t" style="left:217.5px;top:313.1px;font-size:14px;line-height:16px;color:#1a5fcf;letter-spacing:0.1px">03 - [Pulsate] Mensagens</div>
<div class="t" style="right:1212.0px;top:313.1px;font-size:14px;line-height:16px;color:#1c2b33;letter-spacing:-0.35px">R$ 149,13</div>
<div class="t" style="right:1065.5px;top:313.1px;font-size:14px;line-height:16px;color:#1c2b33;letter-spacing:-0.2px">4.661</div>
<div class="t" style="right:919.5px;top:313.1px;font-size:14px;line-height:16px;color:#1c2b33;letter-spacing:-0.2px">8.736</div>
<div class="t" style="right:778.0px;top:313.1px;font-size:14px;line-height:16px;color:#1c2b33;letter-spacing:-0.3px;text-decoration:underline dotted #1c2b33;text-underline-offset:2px">25</div>
<div class="t" style="left:973.4px;top:333.8px;font-size:12px;line-height:14px;color:#67737c;letter-spacing:-0.1px">Conversas por mensa...</div>
<div class="t" style="right:632.0px;top:313.1px;font-size:14px;line-height:16px;color:#1c2b33;letter-spacing:-0.3px;text-decoration:underline dotted #1c2b33;text-underline-offset:2px">R$ 5,97</div>
<div class="t" style="left:1119.3px;top:333.8px;font-size:12px;line-height:14px;color:#67737c;letter-spacing:-0.1px">Por conversa por me...</div>
<div class="t" style="right:485.7px;top:313.1px;font-size:14px;line-height:16px;color:#1c2b33;letter-spacing:-0.3px;text-decoration:underline dotted #1c2b33;text-underline-offset:2px">25</div>
<div class="t" style="right:339.4px;top:313.1px;font-size:14px;line-height:16px;color:#1c2b33;letter-spacing:-0.3px;text-decoration:underline dotted #1c2b33;text-underline-offset:2px">R$ 5,97</div>
<div class="t" style="right:189.2px;top:313.1px;font-size:14px;line-height:16px;color:#1c2b33;letter-spacing:-0.2px">24</div>
<div class="t" style="right:43.4px;top:313.1px;font-size:14px;line-height:16px;color:#1c2b33;letter-spacing:-0.2px">17</div>
<div class="a" style="left:79px;top:364px;width:23.5px;height:23.5px;background:#fff;border:1px solid #c5ccd3;border-radius:5px"></div>
<div class="a" style="left:143px;top:365px;width:38px;height:22px;background:#fff;border:1px solid #cbd2d8;border-radius:11px"></div>
<div class="a" style="left:146px;top:368px;width:16px;height:16px;background:#2a3842;border-radius:50%"></div>
<div class="t" style="left:217.5px;top:359.1px;font-size:14px;line-height:16px;color:#1a5fcf;letter-spacing:0.1px">02 - [Pulsate Media] Remarketing</div>
<div class="t" style="right:1212.0px;top:359.1px;font-size:14px;line-height:16px;color:#1c2b33;letter-spacing:-0.35px">R$ 68,12</div>
<div class="t" style="right:1065.5px;top:359.1px;font-size:14px;line-height:16px;color:#1c2b33;letter-spacing:-0.2px">676</div>
<div class="t" style="right:919.5px;top:359.1px;font-size:14px;line-height:16px;color:#1c2b33;letter-spacing:-0.2px">2.856</div>
<div class="t" style="right:778.0px;top:359.1px;font-size:14px;line-height:16px;color:#1c2b33;letter-spacing:-0.3px;text-decoration:underline dotted #1c2b33;text-underline-offset:2px">1</div>
<div class="t" style="left:973.4px;top:379.8px;font-size:12px;line-height:14px;color:#67737c;letter-spacing:-0.1px">Conversa por mensa...</div>
<div class="t" style="right:632.0px;top:359.1px;font-size:14px;line-height:16px;color:#1c2b33;letter-spacing:-0.3px;text-decoration:underline dotted #1c2b33;text-underline-offset:2px">R$ 68,12</div>
<div class="t" style="left:1119.3px;top:379.8px;font-size:12px;line-height:14px;color:#67737c;letter-spacing:-0.1px">Por conversa por me...</div>
<div class="t" style="right:485.7px;top:359.1px;font-size:14px;line-height:16px;color:#1c2b33;letter-spacing:-0.3px;text-decoration:underline dotted #1c2b33;text-underline-offset:2px">1</div>
<div class="t" style="right:339.4px;top:359.1px;font-size:14px;line-height:16px;color:#1c2b33;letter-spacing:-0.3px;text-decoration:underline dotted #1c2b33;text-underline-offset:2px">R$ 68,12</div>
<div class="t" style="right:189.2px;top:359.1px;font-size:14px;line-height:16px;color:#1c2b33;letter-spacing:-0.2px">1</div>
<div class="t" style="right:43.4px;top:359.1px;font-size:14px;line-height:16px;color:#1c2b33;letter-spacing:-0.2px">1</div>
<div class="a" style="left:79px;top:410px;width:23.5px;height:23.5px;background:#fff;border:1px solid #c5ccd3;border-radius:5px"></div>
<div class="a" style="left:143px;top:411px;width:38px;height:22px;background:#fff;border:1px solid #cbd2d8;border-radius:11px"></div>
<div class="a" style="left:146px;top:414px;width:16px;height:16px;background:#2a3842;border-radius:50%"></div>
<div class="t" style="left:217.5px;top:405.1px;font-size:14px;line-height:16px;color:#1a5fcf;letter-spacing:0.1px">01 - [Pulsate Media] EGJ</div>
<div class="t" style="right:1212.0px;top:405.1px;font-size:14px;line-height:16px;color:#1c2b33;letter-spacing:-0.35px">R$ 106,81</div>
<div class="t" style="right:1065.5px;top:405.1px;font-size:14px;line-height:16px;color:#1c2b33;letter-spacing:-0.2px">14.187</div>
<div class="t" style="right:919.5px;top:405.1px;font-size:14px;line-height:16px;color:#1c2b33;letter-spacing:-0.2px">17.946</div>
<div class="t" style="right:774.0px;top:405.1px;font-size:14px;line-height:16px;color:#1c2b33;letter-spacing:-0.3px;text-decoration:underline dotted #1c2b33;text-underline-offset:2px">900</div>
<div class="t" style="left:973.4px;top:425.8px;font-size:12px;line-height:14px;color:#67737c;letter-spacing:-0.1px">Visitas ao perfil do Ins...</div>
<div class="t" style="right:628.0px;top:405.1px;font-size:14px;line-height:16px;color:#1c2b33;letter-spacing:-0.3px">R$ 0,12</div>
<div class="t" style="left:1119.3px;top:425.8px;font-size:12px;line-height:14px;color:#67737c;letter-spacing:-0.1px">Custo por visita ao pe...</div>
<div class="t" style="right:485.7px;top:405.1px;font-size:14px;line-height:16px;color:#1c2b33;letter-spacing:-0.3px;text-decoration:underline dotted #1c2b33;text-underline-offset:2px">4</div>
<div class="t" style="right:339.4px;top:405.1px;font-size:14px;line-height:16px;color:#1c2b33;letter-spacing:-0.3px;text-decoration:underline dotted #1c2b33;text-underline-offset:2px">R$ 26,70</div>
<div class="t" style="right:189.2px;top:405.1px;font-size:14px;line-height:16px;color:#1c2b33;letter-spacing:-0.2px">—</div>
<div class="t" style="right:43.4px;top:405.1px;font-size:14px;line-height:16px;color:#1c2b33;letter-spacing:-0.2px">3</div>
<div class="a" style="left:79px;top:456px;width:23.5px;height:23.5px;background:#fff;border:1px solid #c5ccd3;border-radius:5px"></div>
<div class="a" style="left:143px;top:457px;width:38px;height:22px;background:#fff;border:1px solid #cbd2d8;border-radius:11px"></div>
<div class="a" style="left:146px;top:460px;width:16px;height:16px;background:#2a3842;border-radius:50%"></div>
<div class="t" style="left:217.5px;top:451.1px;font-size:14px;line-height:16px;color:#1a5fcf;letter-spacing:0.1px">00 - [Pulsate] E. Mensagens</div>
<div class="t" style="right:1212.0px;top:451.1px;font-size:14px;line-height:16px;color:#1c2b33;letter-spacing:-0.35px">R$ 1.074,90</div>
<div class="t" style="right:1065.5px;top:451.1px;font-size:14px;line-height:16px;color:#1c2b33;letter-spacing:-0.2px">23.700</div>
<div class="t" style="right:919.5px;top:451.1px;font-size:14px;line-height:16px;color:#1c2b33;letter-spacing:-0.2px">82.351</div>
<div class="t" style="right:778.0px;top:451.1px;font-size:14px;line-height:16px;color:#1c2b33;letter-spacing:-0.3px;text-decoration:underline dotted #1c2b33;text-underline-offset:2px">141</div>
<div class="t" style="left:973.4px;top:471.8px;font-size:12px;line-height:14px;color:#67737c;letter-spacing:-0.1px">Conversas por mensa...</div>
<div class="t" style="right:632.0px;top:451.1px;font-size:14px;line-height:16px;color:#1c2b33;letter-spacing:-0.3px;text-decoration:underline dotted #1c2b33;text-underline-offset:2px">R$ 7,62</div>
<div class="t" style="left:1119.3px;top:471.8px;font-size:12px;line-height:14px;color:#67737c;letter-spacing:-0.1px">Por conversa por me...</div>
<div class="t" style="right:485.7px;top:451.1px;font-size:14px;line-height:16px;color:#1c2b33;letter-spacing:-0.3px;text-decoration:underline dotted #1c2b33;text-underline-offset:2px">141</div>
<div class="t" style="right:339.4px;top:451.1px;font-size:14px;line-height:16px;color:#1c2b33;letter-spacing:-0.3px;text-decoration:underline dotted #1c2b33;text-underline-offset:2px">R$ 7,62</div>
<div class="t" style="right:189.2px;top:451.1px;font-size:14px;line-height:16px;color:#1c2b33;letter-spacing:-0.2px">132</div>
<div class="t" style="right:43.4px;top:451.1px;font-size:14px;line-height:16px;color:#1c2b33;letter-spacing:-0.2px">128</div>
<div class="t" style="left:221.0px;top:500.5px;font-size:14px;line-height:16px;color:#1c2b33">Resultados de 4 campanhas</div>
<svg style="left:404px;top:502px" width="13" height="13" viewBox="0 0 13 13"><circle cx="6.2" cy="6.2" r="6" fill="#1c2b33"/><circle cx="6.2" cy="3.3" r="1" fill="#fff"/><path d="M6.2 5.4V9.6" stroke="#fff" stroke-width="1.7"/></svg>
</body></html>
